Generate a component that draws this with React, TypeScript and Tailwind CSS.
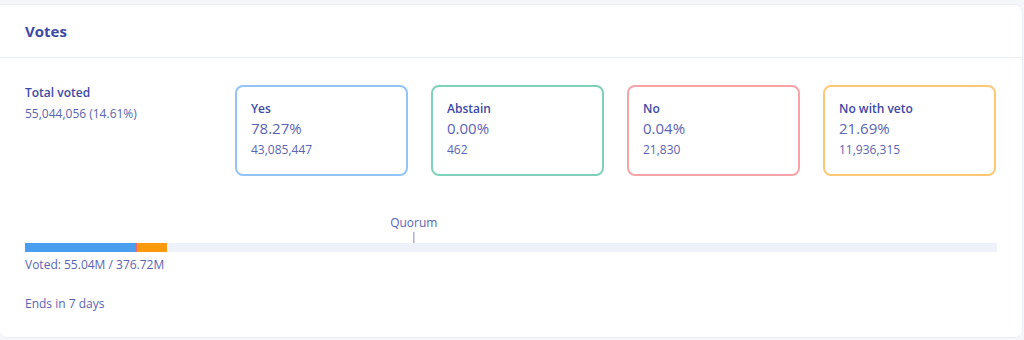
const options = [
  { label: "Yes", pct: "78.27%", count: "43,085,447", border: "border-[#93c4f8]" },
  { label: "Abstain", pct: "0.00%", count: "462", border: "border-[#7fd1b9]" },
  { label: "No", pct: "0.04%", count: "21,830", border: "border-[#f7a3aa]" },
  { label: "No with veto", pct: "21.69%", count: "11,936,315", border: "border-[#fdc875]" },
];

const App = () => {
  return (
    <div className="bg-[#f5f6fa] h-[340px] pt-[4px] pr-[1px] font-['Open_Sans',sans-serif]">
      <div className="bg-white h-[334px] rounded-r-lg rounded-bl-lg border border-l-0 border-[#eceef5] flex flex-col">
        <div className="h-[53px] flex items-center px-[25px] border-b border-[#eceef5]">
          <h2 className="text-[15px] font-bold text-[#3c4aa5]">Votes</h2>
        </div>

        <div className="flex-1 pr-[25px] pl-[25px] pt-[27px]">
          <div className="flex">
            <div className="w-[210px] pt-[1px]">
              <p className="text-[12px] font-semibold text-[#3c4aa5] leading-[14px]">Total voted</p>
              <p className="text-[12px] text-[#5a64b4] mt-[7px] leading-[14px]">55,044,056 (14.61%)</p>
            </div>
            <div className="flex gap-[23px]">
              {options.map((o) => (
                <div key={o.label} className={`w-[173px] h-[91px] rounded-lg border-2 ${o.border} px-[14px] pt-[14px]`}>
                  <p className="text-[12px] font-semibold text-[#3c4aa5] leading-[16px]">{o.label}</p>
                  <p className="text-[15px] text-[#5a64b4] leading-[20px] mt-[1px]">{o.pct}</p>
                  <p className="text-[12px] text-[#5a64b4] leading-[14px] mt-[5px]">{o.count}</p>
                </div>
              ))}
            </div>
          </div>

          <div className="mt-[38px] relative">
            <div className="relative h-[29px]">
              <div className="absolute left-[40%] -translate-x-1/2 top-[1px] flex flex-col items-center">
                <span className="text-[12px] text-[#5a64b4] leading-[15px]">Quorum</span>
                <span className="w-[1px] h-[11px] bg-[#7d86c6] mt-[2px]"></span>
              </div>
            </div>
            <div className="h-[9px] bg-[#eff2fb] flex">
              <div className="bg-[#4a9ef0] w-[11.43%]"></div>
              <div className="bg-[#f4606b] w-[1px]"></div>
              <div className="bg-[#fb9a0c] w-[3.1%]"></div>
            </div>
            <p className="text-[12px] text-[#5a64b4] mt-[5px] leading-[15px]">Voted: 55.04M / 376.72M</p>
            <p className="text-[12px] text-[#5a64b4] mt-[24px] leading-[15px]">Ends in 7 days</p>
          </div>
        </div>
      </div>
    </div>
  );
};

export default App;
